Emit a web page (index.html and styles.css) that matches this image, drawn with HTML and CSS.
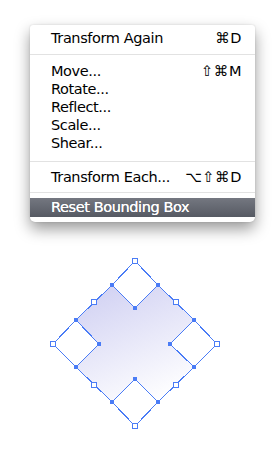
FILE: index.html
```html
<!DOCTYPE html>
<html>
<head>
<meta charset="utf-8">
<link rel="stylesheet" href="styles.css">
</head>
<body>
<div class="menu">
  <div class="item"><span>Transform Again</span><span class="key">⌘D</span></div>
  <div class="sep"></div>
  <div class="item"><span>Move...</span><span class="key">⇧⌘M</span></div>
  <div class="item"><span>Rotate...</span></div>
  <div class="item"><span>Reflect...</span></div>
  <div class="item"><span>Scale...</span></div>
  <div class="item"><span>Shear...</span></div>
  <div class="sep sep-b"></div>
  <div class="item"><span>Transform Each...</span><span class="key">⌥⇧⌘D</span></div>
  <div class="sep sep-c"></div>
  <div class="item active"><span>Reset Bounding Box</span></div>
</div>
<svg class="art" width="279" height="209" viewBox="0 240 279 209">
  <defs>
    <linearGradient id="fillg" x1="0.25" y1="0" x2="0.7" y2="1">
      <stop offset="0" stop-color="#d2d2f3"/>
      <stop offset="1" stop-color="#ffffff"/>
    </linearGradient>
  </defs>
  <polygon points="112,285 135,308 158,285 194,320 170,344 194,367 158,402 135,379 112,402 76,367 99,344 76,320" fill="url(#fillg)"/>
  <g class="edge" fill="none" stroke="#4a7cf6" stroke-width="1">
    <polygon points="112,285 135,308 158,285 194,320 170,344 194,367 158,402 135,379 112,402 76,367 99,344 76,320"/>
    <polygon points="135,261 158,285 135,308 112,285"/>
    <polygon points="194,320 217,344 194,367 170,344"/>
    <polygon points="135,379 158,402 135,426 112,402"/>
    <polygon points="76,320 99,344 76,367 53,344"/>
  </g>
  <g fill="#4a7cf6">
    <rect x="110" y="283" width="4" height="4"/>
    <rect x="156" y="283" width="4" height="4"/>
    <rect x="133" y="306" width="4" height="4"/>
    <rect x="74" y="318" width="4" height="4"/>
    <rect x="97" y="342" width="4" height="4"/>
    <rect x="74" y="365" width="4" height="4"/>
    <rect x="192" y="318" width="4" height="4"/>
    <rect x="168" y="342" width="4" height="4"/>
    <rect x="192" y="365" width="4" height="4"/>
    <rect x="133" y="377" width="4" height="4"/>
    <rect x="110" y="400" width="4" height="4"/>
    <rect x="156" y="400" width="4" height="4"/>
  </g>
  <g fill="#ffffff" stroke="#4a7cf6" stroke-width="1">
    <rect x="132.5" y="258.5" width="5" height="5"/>
    <rect x="214.5" y="341.5" width="5" height="5"/>
    <rect x="132.5" y="423.5" width="5" height="5"/>
    <rect x="50.5" y="341.5" width="5" height="5"/>
    <rect x="91.5" y="299.5" width="5" height="5"/>
    <rect x="173.5" y="299.5" width="5" height="5"/>
    <rect x="91.5" y="382.5" width="5" height="5"/>
    <rect x="173.5" y="382.5" width="5" height="5"/>
  </g>
</svg>
</body>
</html>
```
FILE: styles.css
```css
html, body {
  margin: 0;
  padding: 0;
  background: #ffffff;
}
body {
  font-family: "DejaVu Sans", "Liberation Sans", sans-serif;
  font-size: 14.5px;
  color: #000;
  width: 279px;
  height: 449px;
  overflow: hidden;
}
.menu {
  margin: 25px 0 0 30px;
  width: 225px;
  padding: 4px 0 5px;
  background: #ffffff;
  border-radius: 3px 3px 5px 5px;
  box-shadow: 0 7px 15px rgba(0, 0, 0, 0.4), 0 0 2px rgba(0, 0, 0, 0.15);
  box-sizing: border-box;
}
.item {
  display: flex;
  justify-content: space-between;
  height: 18px;
  line-height: 18px;
  padding: 0 13px 0 21px;
  letter-spacing: -0.4px;
  white-space: nowrap;
}
.key {
  letter-spacing: 0.6px;
}
.sep {
  height: 1px;
  background: #e2e2e2;
  margin: 7px 0 7px;
}
.sep-b {
  margin: 9px 0 6px;
}
.sep-c {
  margin: 6px 0 5px;
}
.active {
  height: 19px;
  line-height: 19px;
  color: #ffffff;
  background: linear-gradient(#747780, #565a63);
  text-shadow: 0 0 0.5px #fff;
}
.art {
  display: block;
  margin-top: 18px;
}
.edge {
  shape-rendering: crispEdges;
}
```
